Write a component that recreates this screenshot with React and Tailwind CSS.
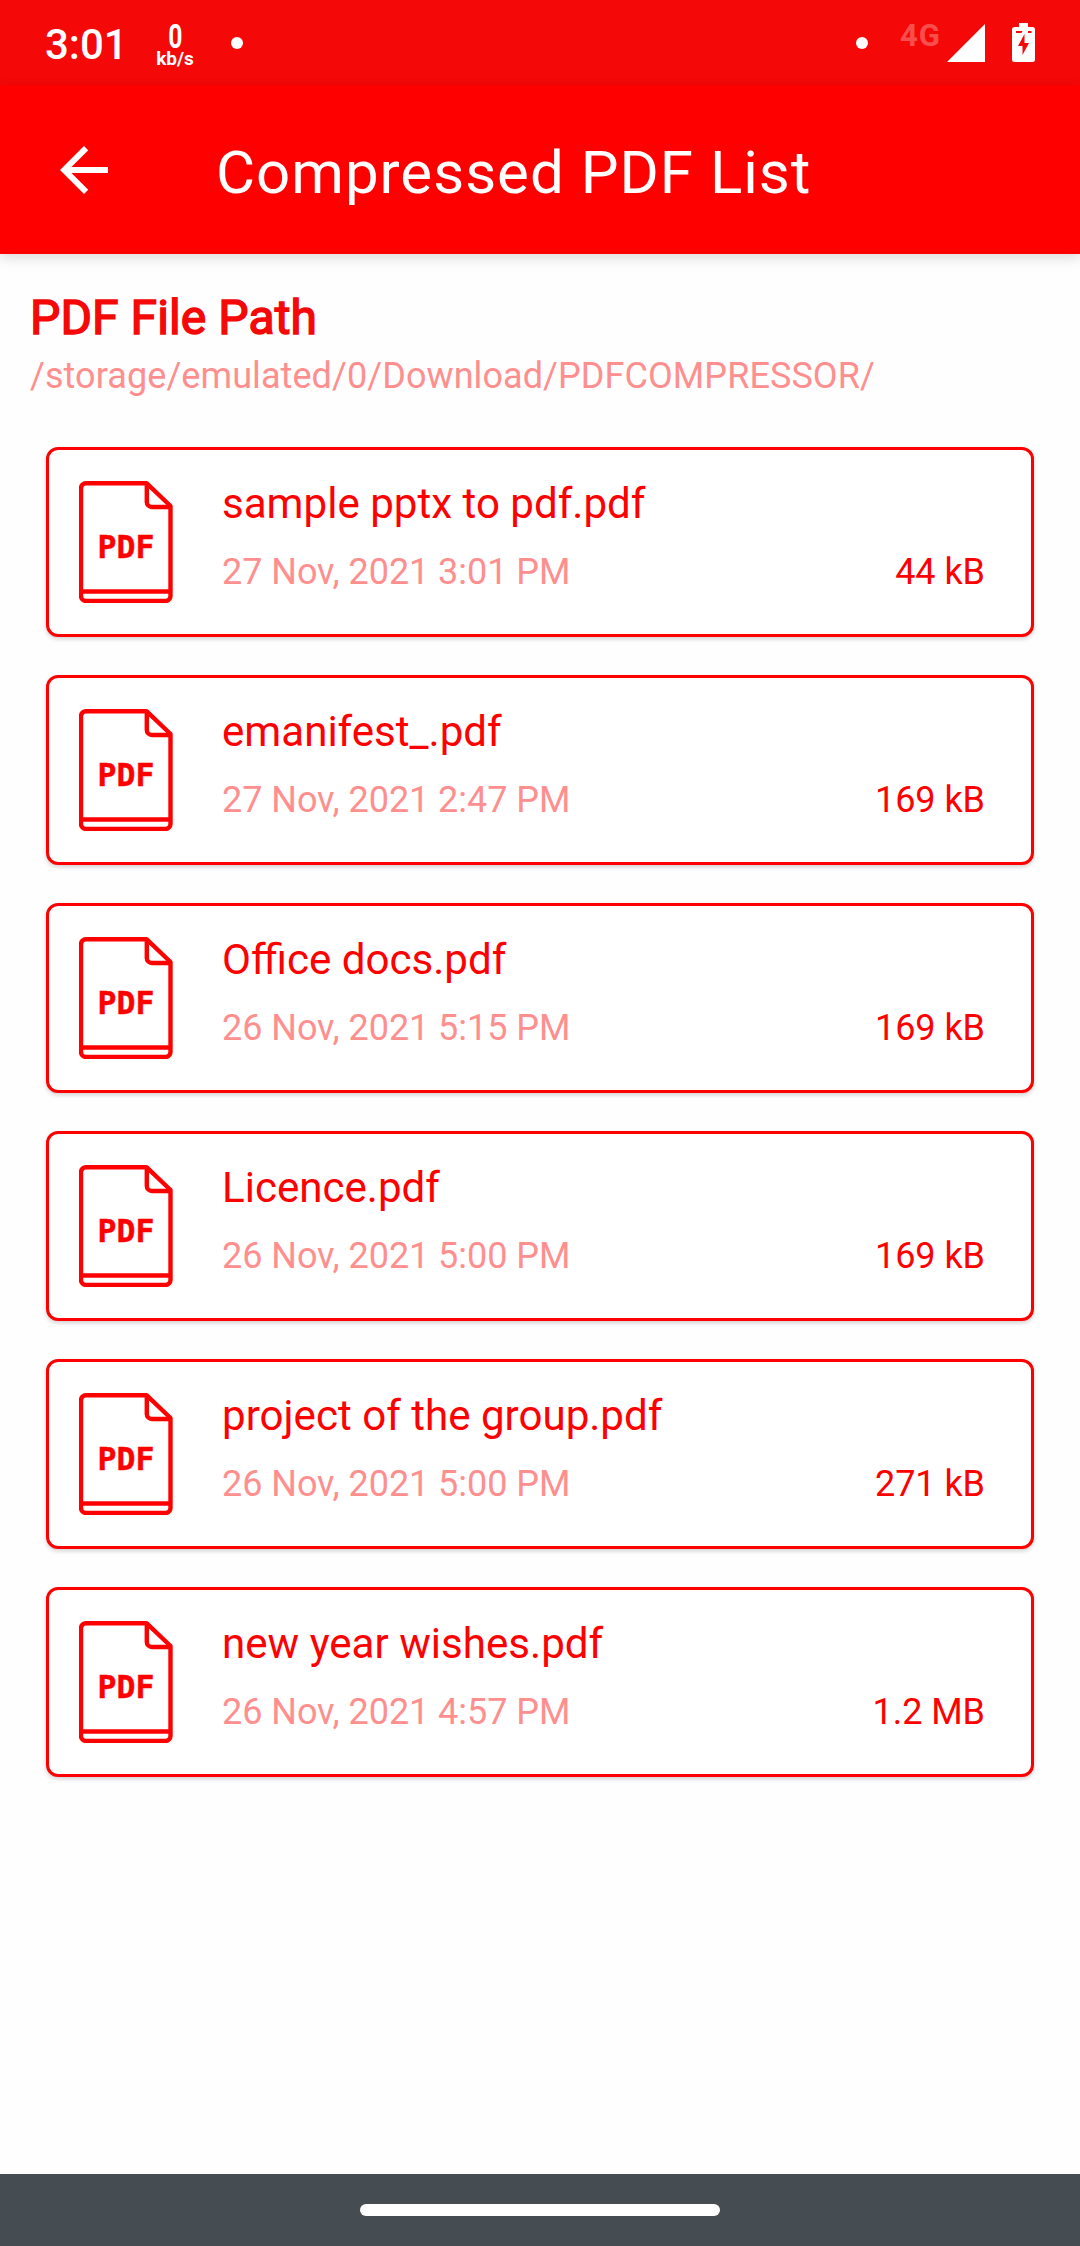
import { MdArrowBack } from "react-icons/md";

const files = [
  { name: "sample pptx to pdf.pdf", date: "27 Nov, 2021 3:01 PM", size: "44 kB" },
  { name: "emanifest_.pdf", date: "27 Nov, 2021 2:47 PM", size: "169 kB" },
  { name: "Office docs.pdf", date: "26 Nov, 2021 5:15 PM", size: "169 kB" },
  { name: "Licence.pdf", date: "26 Nov, 2021 5:00 PM", size: "169 kB" },
  { name: "project of the group.pdf", date: "26 Nov, 2021 5:00 PM", size: "271 kB" },
  { name: "new year wishes.pdf", date: "26 Nov, 2021 4:57 PM", size: "1.2 MB" },
];

function PdfIcon() {
  return (
    <svg className="h-[122px] w-[94px] shrink-0" viewBox="0 0 94 122" fill="none" stroke="#ff0000" strokeWidth="4.4">
      <path d="M7 2.2h60.5L91.5 25v90a5 5 0 0 1-5 5H7a5 5 0 0 1-5-5V7.2a5 5 0 0 1 5-5z" strokeLinejoin="round" />
      <path d="M67.8 3v18a5 5 0 0 0 5 5H91" />
      <path d="M2 110.500h90" />
      <text x="18.5" y="77" className="font-['DejaVu_Sans_Mono',monospace]" fill="#ff0000" stroke="#ff0000" strokeWidth="0.4" fontSize="31.500" fontWeight="700">
        PDF
      </text>
    </svg>
  );
}

function StatusBar() {
  return (
    <div className="flex h-[85px] items-start bg-[#f40808] px-[45px] text-white">
      <span className="mt-[24px] w-[80px] text-[42px] leading-[42px] font-medium">3:01</span>
      <div className="mt-[20px] ml-[29px] flex w-[42px] flex-col items-center font-bold">
        <span className="h-[28px] scale-x-75 text-[33px] leading-[33px]">0</span>
        <span className="mt-px text-[19px] leading-[20px]">kb/s</span>
      </div>
      <span className="mt-[37px] ml-[35px] size-3 rounded-full bg-white" />
      <div className="ml-auto flex items-start">
        <span className="mt-[37px] size-3 rounded-full bg-white" />
        <span className="mt-[20px] ml-[32px] w-[47px] text-[31px] leading-[31px] font-bold tracking-[1px] text-white/30">4G</span>
        <svg className="mt-[24px] h-[38px] w-[38px]" viewBox="0 0 38 38" fill="white">
          <path d="M38 0v38H0z" />
        </svg>
        <svg className="mt-[23px] ml-[27px] h-[39px] w-[23px]" viewBox="0 0 23 39">
          <path fill="white" d="M7 0h9v4h4.500a2.500 2.500 0 0 1 2.500 2.500v30a2.500 2.500 0 0 1-2.500 2.500h-18A2.500 2.500 0 0 1 0 36.500v-30A2.500 2.500 0 0 1 2.500 4H7z" />
          <path fill="#f40808" d="M4 8h6.500l-1 2H4zM16 8h3.500v2H16zM12.500 11v9H17l-6.500 12v-9H6z" />
        </svg>
      </div>
    </div>
  );
}

function FileCard({ file }) {
  return (
    <div className="flex h-[190px] items-start rounded-[12px] border-[3px] border-[#ff0000] bg-white pr-[46px] pl-[30px] shadow-[0_2px_4px_rgba(0,0,0,0.18)]">
      <div className="mt-[31px]">
        <PdfIcon />
      </div>
      <div className="ml-[49px] flex-1 pt-[29px]">
        <div className="text-[42.1px] leading-[50px] text-[#ff0000]">{file.name}</div>
        <div className="mt-[21px] flex items-center justify-between text-[36px] leading-[44px] tracking-[-0.05px]">
          <span className="text-[#ff8f8f]">{file.date}</span>
          <span className="text-[#ff0000]">{file.size}</span>
        </div>
      </div>
    </div>
  );
}

export default function App() {
  return (
    <div className="flex h-[2246px] w-[1080px] flex-col bg-[#fefefe] font-['Roboto',sans-serif]">
      <StatusBar />
      <header className="flex h-[169px] items-start bg-[#ff0000] pl-[48px] text-white shadow-[0_4px_12px_rgba(0,0,0,0.14)]">
        <MdArrowBack className="mt-[49px] size-[72px]" />
        <h1 className="mt-[52px] ml-[96px] text-[60px] leading-[72px] tracking-[1px]">Compressed PDF List</h1>
      </header>
      <main className="flex-1">
        <div className="px-[30px] pt-[34px]">
          <h2 className="text-[48px] leading-[60px] tracking-[0.1px] text-[#f40808] [-webkit-text-stroke:1.500px_#f40808]">PDF File Path</h2>
          <p className="mt-[6px] text-[36px] leading-[44px] tracking-[0.08px] text-[#ff8f8f]">/storage/emulated/0/Download/PDFCOMPRESSOR/</p>
        </div>
        <div className="mx-[46px] mt-[49px] flex flex-col gap-[38px]">
          {files.map((file) => (
            <FileCard key={file.name} file={file} />
          ))}
        </div>
      </main>
      <footer className="flex h-[72px] items-center justify-center bg-[#454c52]">
        <div className="h-3 w-[360px] rounded-full bg-white" />
      </footer>
    </div>
  );
}
